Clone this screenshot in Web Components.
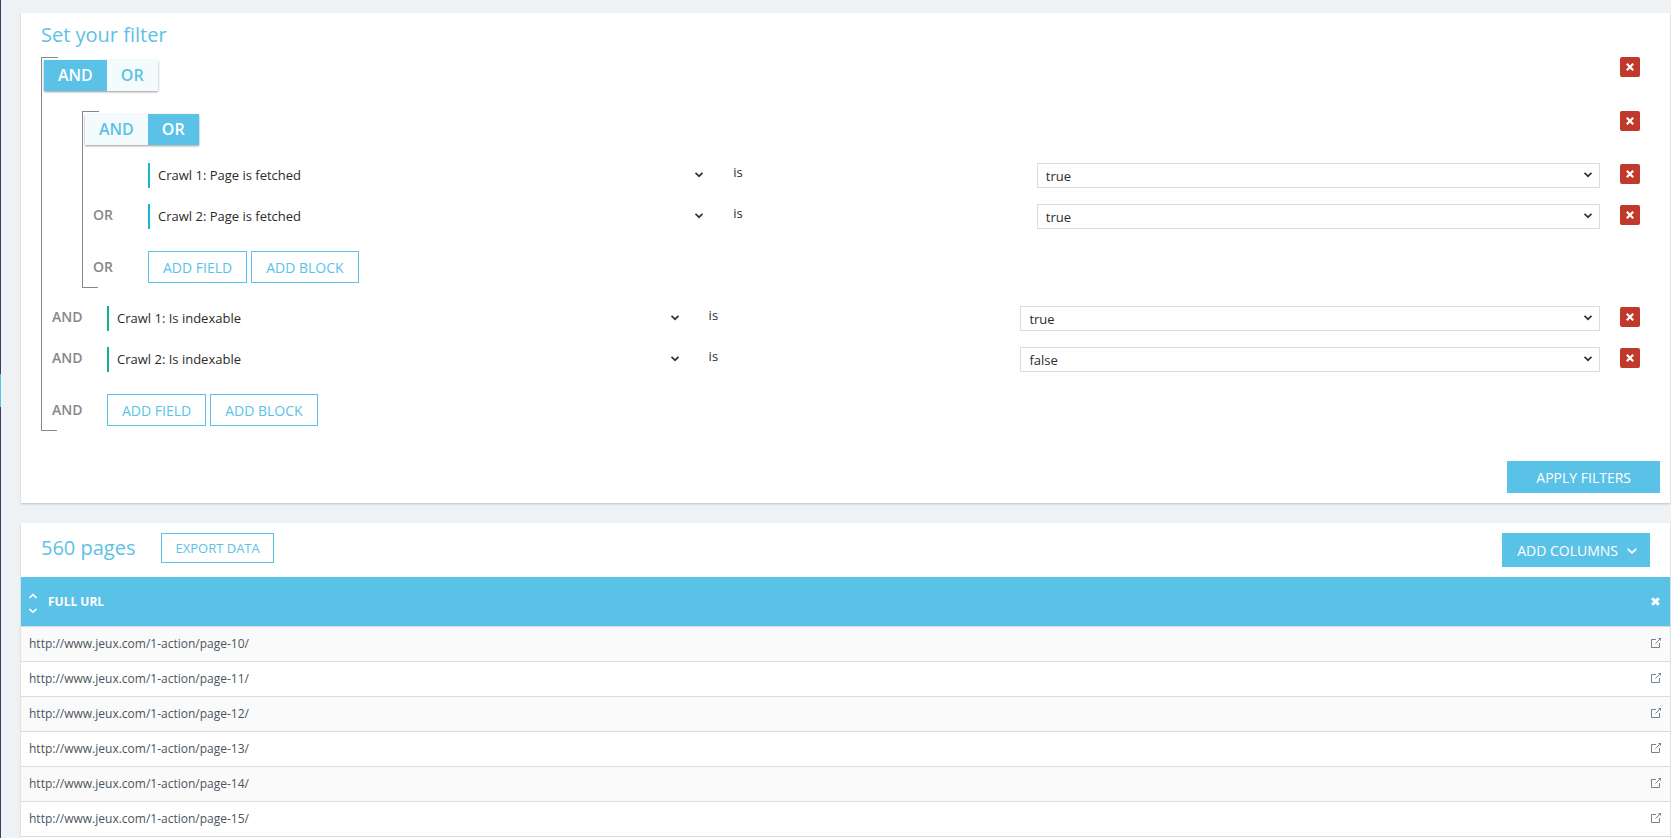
<!DOCTYPE html>
<html lang="en">
<head>
    <meta charset="utf-8">
    <title>Pages explorer</title>
    <style>
        body {
            margin: 0;
            min-height: 100vh;
            display: flex;
            overflow: hidden;
            background: #eef2f5;
            color: #2b2b2b;
            font-family: "Open Sans", sans-serif;
            font-size: 13px;

            --blue: #5bc2e7;
            --red: #c0392b;
            --grey: #888;
            --line: #dcdcdc;
        }
    </style>
</head>
<body>
    <side-edge></side-edge>
    <explorer-page>
        <content-panel>
            <panel-title>Set your filter</panel-title>
            <filter-block operator="AND">
                <filter-block operator="OR">
                    <filter-row field="Crawl 1: Page is fetched" value="true" accent="#12b8cb"></filter-row>
                    <filter-row join="OR" field="Crawl 2: Page is fetched" value="true" accent="#12b8cb"></filter-row>
                </filter-block>
                <filter-row join="AND" field="Crawl 1: Is indexable" value="true" accent="#14b090"></filter-row>
                <filter-row join="AND" field="Crawl 2: Is indexable" value="false" accent="#14b090"></filter-row>
            </filter-block>
            <flat-button slot="footer" kind="solid">APPLY FILTERS</flat-button>
        </content-panel>
        <results-panel>
            <panel-title slot="title">560 pages</panel-title>
            <flat-button slot="export" kind="small">EXPORT DATA</flat-button>
            <flat-button slot="columns" kind="menu">ADD COLUMNS</flat-button>
            <url-table first="10" last="15"></url-table>
        </results-panel>
    </explorer-page>

    <script>
        class SideEdge extends HTMLElement {
            connectedCallback() {
                this.attachShadow({mode: "open"}).innerHTML = `
                    <style>
                        :host {
                            flex: 0 0 1px;
                            display: flex;
                            flex-direction: column;
                            background: #38425a;
                        }

                        .active {
                            height: 33px;
                            margin-top: 374px;
                            background: var(--blue);
                        }
                    </style>
                    <div class="active"></div>
                `;
            }
        }
        customElements.define("side-edge", SideEdge);

        class ExplorerPage extends HTMLElement {
            connectedCallback() {
                this.attachShadow({mode: "open"}).innerHTML = `
                    <style>
                        :host {
                            flex: 1;
                            min-width: 0;
                            display: flex;
                            flex-direction: column;
                            gap: 20px;
                            padding: 13px 1px 0 20px;
                        }
                    </style>
                    <slot></slot>
                `;
            }
        }
        customElements.define("explorer-page", ExplorerPage);

        class ContentPanel extends HTMLElement {
            connectedCallback() {
                this.attachShadow({mode: "open"}).innerHTML = `
                    <style>
                        :host {
                            display: block;
                            background: white;
                            box-shadow: 0 1px 2px rgba(0,0,0,0.2);
                        }

                        .content {
                            display: flex;
                            flex-direction: column;
                            gap: 7px;
                            padding: 7px 30px 0 20px;
                        }

                        .footer {
                            display: flex;
                            justify-content: flex-end;
                            padding: 30px 10px 10px;
                        }
                    </style>
                    <div class="content"><slot></slot></div>
                    <div class="footer"><slot name="footer"></slot></div>
                `;
            }
        }
        customElements.define("content-panel", ContentPanel);

        class PanelTitle extends HTMLElement {
            connectedCallback() {
                this.attachShadow({mode: "open"}).innerHTML = `
                    <style>
                        :host {
                            display: block;
                        }

                        h2 {
                            margin: 0;
                            color: var(--blue);
                            font-size: 20px;
                            font-weight: 400;
                            line-height: 30px;
                        }
                    </style>
                    <h2><slot></slot></h2>
                `;
            }
        }
        customElements.define("panel-title", PanelTitle);

        class FlatButton extends HTMLElement {
            connectedCallback() {
                const arrow = this.getAttribute("kind") === "menu"
                    ? `<svg width="10" height="6" viewBox="0 0 10 6"><path d="M.7 .9l4.300 4 4.300-4" fill="none" stroke="currentColor" stroke-width="1.700"/></svg>`
                    : "";
                this.attachShadow({mode: "open"}).innerHTML = `
                    <style>
                        :host {
                            display: block;
                        }

                        button {
                            display: flex;
                            align-items: center;
                            gap: 9px;
                            box-sizing: border-box;
                            height: 32px;
                            padding: 0 14px;
                            border: 1px solid var(--blue);
                            border-radius: 0;
                            background: white;
                            color: var(--blue);
                            font: 14px "Open Sans", sans-serif;
                            cursor: pointer;
                        }

                        :host([kind="small"]) button {
                            height: 30px;
                            padding: 0 13px;
                            font-size: 13px;
                        }

                        :host([kind="solid"]) button,
                        :host([kind="menu"]) button {
                            background: var(--blue);
                            color: white;
                        }

                        :host([kind="solid"]) button {
                            padding: 0 28px;
                        }

                        :host([kind="menu"]) button {
                            height: 34px;
                            padding: 0 12px 0 14px;
                        }

                        svg {
                            margin-top: 2px;
                        }
                    </style>
                    <button type="button"><slot></slot>${arrow}</button>
                `;
            }
        }
        customElements.define("flat-button", FlatButton);

        class DeleteButton extends HTMLElement {
            connectedCallback() {
                this.attachShadow({mode: "open"}).innerHTML = `
                    <style>
                        :host {
                            display: block;
                        }

                        button {
                            display: flex;
                            align-items: center;
                            justify-content: center;
                            width: 20px;
                            height: 20px;
                            padding: 0;
                            border: none;
                            border-radius: 2px;
                            background: var(--red);
                            color: white;
                            cursor: pointer;
                        }
                    </style>
                    <button type="button" aria-label="Delete">
                        <svg width="8" height="8" viewBox="0 0 8 8"><path d="M.8 .8l6.400 6.400M7.200 .8L.8 7.200" stroke="currentColor" stroke-width="2.200"/></svg>
                    </button>
                `;
            }
        }
        customElements.define("delete-button", DeleteButton);

        class OperatorToggle extends HTMLElement {
            connectedCallback() {
                this.attachShadow({mode: "open"});
                this.render();
            }

            render() {
                const operator = this.getAttribute("operator");
                const button = name => `<button type="button" aria-pressed="${name === operator}">${name}</button>`;
                this.shadowRoot.innerHTML = `
                    <style>
                        :host {
                            display: flex;
                            box-shadow: 0 1px 2px rgba(0,0,0,0.4);
                        }

                        button {
                            height: 31px;
                            padding: 0 14px 2px;
                            border: none;
                            background: #f3fbfd;
                            color: var(--blue);
                            font: 600 16px "Open Sans", sans-serif;
                            cursor: pointer;
                        }

                        button[aria-pressed="true"] {
                            background: var(--blue);
                            color: white;
                        }
                    </style>
                    ${button("AND")}${button("OR")}
                `;
                for (let item of this.shadowRoot.querySelectorAll("button")) {
                    item.addEventListener("click", () => {
                        this.setAttribute("operator", item.innerText);
                        this.render();
                    });
                }
            }
        }
        customElements.define("operator-toggle", OperatorToggle);

        class DropDown extends HTMLElement {
            connectedCallback() {
                const values = this.getAttribute("options").split("|");
                const selected = this.getAttribute("value");
                const options = values.map(value =>
                    `<option${value === selected ? " selected" : ""}>${value}</option>`).join("");
                this.attachShadow({mode: "open"}).innerHTML = `
                    <style>
                        :host {
                            display: grid;
                            align-items: center;
                            min-width: 0;
                        }

                        select, svg {
                            grid-area: 1 / 1;
                        }

                        select {
                            appearance: none;
                            box-sizing: border-box;
                            width: 100%;
                            height: 25px;
                            padding: 0 24px 0 8px;
                            border: 1px solid var(--line);
                            border-radius: 0;
                            background: white;
                            color: inherit;
                            font: 13px "Open Sans", sans-serif;
                        }

                        :host([accent]) select {
                            padding-bottom: 2px;
                            border: none;
                            border-left: 2px solid var(--accent);
                        }

                        svg {
                            justify-self: end;
                            margin: 0 8px 1px 0;
                            pointer-events: none;
                        }
                    </style>
                    <select aria-label="${this.getAttribute("label")}">${options}</select>
                    <svg width="8" height="6" viewBox="0 0 8 6"><path d="M.5 .8L4 4.200 7.500 .8" fill="none" stroke="#333" stroke-width="1.700"/></svg>
                `;
                this.style.setProperty("--accent", this.getAttribute("accent"));
            }
        }
        customElements.define("drop-down", DropDown);

        class FilterRow extends HTMLElement {
            connectedCallback() {
                const field = this.getAttribute("field");
                const accent = this.getAttribute("accent");
                this.attachShadow({mode: "open"}).innerHTML = `
                    <style>
                        :host {
                            display: flex;
                            align-items: flex-start;
                            height: 25px;
                        }

                        .join {
                            flex: 0 0 55px;
                            color: var(--grey);
                            font-size: 14px;
                            font-weight: 600;
                            line-height: 22px;
                        }

                        .condition {
                            flex: 1;
                            display: grid;
                            grid-template-columns: 2fr 1fr 2fr;
                            gap: 22px;
                        }

                        .test {
                            line-height: 18px;
                        }

                        delete-button {
                            margin: 1px 0 0 20px;
                        }
                    </style>
                    <span class="join">${this.getAttribute("join") || ""}</span>
                    <div class="condition">
                        <drop-down label="Field" value="${field}" options="${field}" accent="${accent}"></drop-down>
                        <span class="test">is</span>
                        <drop-down label="Value" value="${this.getAttribute("value")}" options="true|false"></drop-down>
                    </div>
                    <delete-button></delete-button>
                `;
            }
        }
        customElements.define("filter-row", FilterRow);

        class FilterBlock extends HTMLElement {
            connectedCallback() {
                const operator = this.getAttribute("operator");
                this.attachShadow({mode: "open"}).innerHTML = `
                    <style>
                        /* The bracket is a left border with a short stub at each end */
                        :host {
                            display: block;
                            border-left: 1px solid var(--grey);
                            background:
                                linear-gradient(var(--grey), var(--grey)) 0 0 / 16px 1px no-repeat,
                                linear-gradient(var(--grey), var(--grey)) 0 100% / 15px 1px no-repeat;
                        }

                        .head {
                            display: flex;
                            justify-content: space-between;
                            align-items: flex-start;
                            margin-bottom: 18px;
                        }

                        operator-toggle {
                            margin: 3px 0 0 2px;
                        }

                        .rows {
                            display: flex;
                            flex-direction: column;
                            gap: 16px;
                        }

                        ::slotted(filter-row) {
                            margin-left: 10px;
                        }

                        ::slotted(filter-block) {
                            margin: 2px 0 2px 40px;
                        }

                        .add {
                            display: flex;
                            gap: 4px;
                            padding: 22px 0 5px 10px;
                        }

                        .join {
                            flex: 0 0 51px;
                            color: var(--grey);
                            font-size: 14px;
                            font-weight: 600;
                            line-height: 31px;
                        }
                    </style>
                    <div class="head">
                        <operator-toggle operator="${operator}"></operator-toggle>
                        <delete-button></delete-button>
                    </div>
                    <div class="rows"><slot></slot></div>
                    <div class="add">
                        <span class="join">${operator}</span>
                        <flat-button>ADD FIELD</flat-button>
                        <flat-button>ADD BLOCK</flat-button>
                    </div>
                `;
            }
        }
        customElements.define("filter-block", FilterBlock);

        class ResultsPanel extends HTMLElement {
            connectedCallback() {
                this.attachShadow({mode: "open"}).innerHTML = `
                    <style>
                        :host {
                            flex: 1;
                            display: block;
                            background: white;
                            box-shadow: 0 1px 2px rgba(0,0,0,0.2);
                        }

                        .bar {
                            display: flex;
                            align-items: flex-start;
                            gap: 26px;
                            padding: 10px 20px;
                        }

                        .columns {
                            margin-left: auto;
                        }
                    </style>
                    <div class="bar">
                        <slot name="title"></slot>
                        <slot name="export"></slot>
                        <div class="columns"><slot name="columns"></slot></div>
                    </div>
                    <slot></slot>
                `;
            }
        }
        customElements.define("results-panel", ResultsPanel);

        class UrlTable extends HTMLElement {
            connectedCallback() {
                let rows = "";
                for (let page = Number(this.getAttribute("first")); page <= Number(this.getAttribute("last")); page++) {
                    const url = `http://www.jeux.com/1-action/page-${page}/`;
                    rows += `
                        <tr>
                            <td>${url}</td>
                            <td class="action">
                                <a href="${url}" aria-label="Open page">
                                    <svg width="10" height="10" viewBox="0 0 10 10" fill="none" stroke="currentColor"><path d="M5 1.500H.5v8h8V5"/><path d="M4.500 5.500L8.500 1.500"/><path d="M7 0H10v3z" fill="currentColor" stroke="none"/></svg>
                                </a>
                            </td>
                        </tr>`;
                }
                this.attachShadow({mode: "open"}).innerHTML = `
                    <style>
                        :host {
                            display: block;
                        }

                        table {
                            width: 100%;
                            border-spacing: 0;
                            color: #4a5560;
                            font-size: 12px;
                            border-bottom: 1px solid var(--line);
                        }

                        th {
                            height: 49px;
                            padding: 0 8px;
                            background: var(--blue);
                            color: white;
                            font-weight: 700;
                            text-align: left;
                        }

                        td {
                            box-sizing: border-box;
                            height: 35px;
                            padding: 0 8px 2px;
                            border-top: 1px solid var(--line);
                        }

                        tbody tr:nth-child(odd) {
                            background: #fafafa;
                        }

                        .action {
                            width: 10px;
                            padding-left: 0;
                        }

                        td.action {
                            padding-right: 7px;
                        }

                        th.action {
                            padding-right: 9px;
                        }

                        button {
                            display: flex;
                            align-items: center;
                            gap: 11px;
                            padding: 0;
                            border: none;
                            background: none;
                            color: inherit;
                            font: inherit;
                            cursor: pointer;
                        }

                        a {
                            color: #75838f;
                        }

                        svg {
                            display: block;
                        }
                    </style>
                    <table>
                        <thead>
                            <tr>
                                <th>
                                    <button type="button">
                                        <svg width="8" height="22" viewBox="0 0 8 22" fill="none" stroke="currentColor" stroke-width="1.600"><path d="M.5 7L4 3.700 7.500 7"/><path d="M.5 18L4 21.200 7.500 18"/></svg>
                                        FULL URL
                                    </button>
                                </th>
                                <th class="action">
                                    <button type="button" aria-label="Remove column">
                                        <svg width="9" height="9" viewBox="0 0 9 9"><path d="M1.200 1.200l6.600 6.600M7.800 1.200L1.200 7.800" stroke="currentColor" stroke-width="3"/></svg>
                                    </button>
                                </th>
                            </tr>
                        </thead>
                        <tbody>${rows}</tbody>
                    </table>
                `;
            }
        }
        customElements.define("url-table", UrlTable);
    </script>
</body>
</html>
